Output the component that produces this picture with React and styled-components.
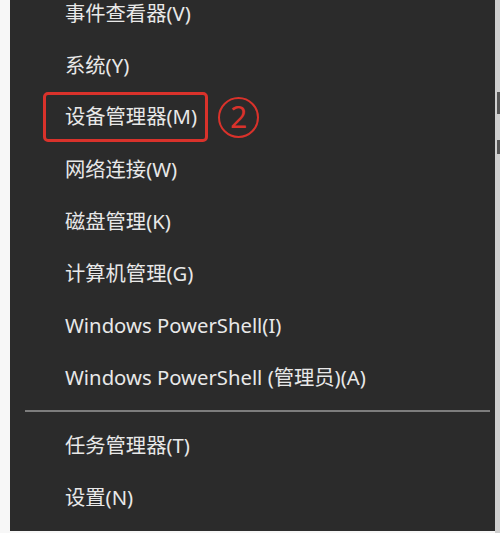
import React from 'react'
import styled, { createGlobalStyle } from 'styled-components'

const GlobalStyle = createGlobalStyle`
    html, body { margin: 0; padding: 0; background: #f4f4f4; }
    body { font-family: "Noto Sans", "Noto Sans CJK SC", sans-serif; }
`

const items = [
    { label: '事件查看器(V)' },
    { label: '系统(Y)' },
    { label: '设备管理器(M)', marked: true, step: '2' },
    { label: '网络连接(W)' },
    { label: '磁盘管理(K)' },
    { label: '计算机管理(G)' },
    { label: 'Windows PowerShell(I)' },
    { label: 'Windows PowerShell (管理员)(A)' },
    { divider: true },
    { label: '任务管理器(T)' },
    { label: '设置(N)' }
]

const App = () => (
    <Page>
        <GlobalStyle />
        <Gutter />
        <Menu>
            <List>
                {items.map((item, i) => item.divider
                    ? <Divider key={i} />
                    : (
                        <Row key={i}>
                            <Label marked={item.marked}>{item.label}</Label>
                            {item.step && <Step>{item.step}</Step>}
                        </Row>
                    ))}
            </List>
        </Menu>
        <BehindWindow>
            <Mark top='92px' h='22px' />
            <Mark top='140px' h='14px' />
        </BehindWindow>
    </Page>
)

export default App

const Page = styled.div`
    display: flex;
    height: 533px;
    width: 500px;
    overflow: hidden;
    background: #f7f7f7;
`
const Gutter = styled.div`
    width: 10px;
    flex-shrink: 0;
    background: #f7f7f7;
`
const Menu = styled.div`
    flex: 1;
    height: 531px;
    background: #2b2b2b;
    overflow: hidden;
`
const List = styled.div`
    display: flex;
    flex-direction: column;
    margin-top: -13px;
`
const Row = styled.div`
    display: flex;
    align-items: center;
    height: 52px;
    padding-left: 55px;
`
const Label = styled.span`
    color: #e8e8e8;
    font-size: 20.3px;
    line-height: 26px;
    white-space: nowrap;
    ${ ({ marked }) => marked && `
        border: 3px solid #d9322b;
        border-radius: 5px;
        padding: 8px 8px 10px 19px;
        margin-left: -22px;
    ` }
`
const Step = styled.span`
    display: inline-flex;
    align-items: center;
    justify-content: center;
    box-sizing: border-box;
    width: 41px;
    height: 41px;
    margin-left: 10px;
    border: 2.5px solid #d9322b;
    border-radius: 50%;
    color: #d9322b;
    font-family: "Noto Sans", sans-serif;
    font-size: 30px;
    font-weight: 400;
    line-height: 1;
`
const Divider = styled.div`
    height: 16px;
    display: flex;
    align-items: center;
    padding: 0 15px 0 15px;
    margin-right: -10px;
    &::after {
        content: "";
        flex: 1;
        height: 2px;
        background: #7d7d7d;
    }
`
const BehindWindow = styled.div`
    position: relative;
    width: 5px;
    flex-shrink: 0;
    background: #cfcfcf;
`
const Mark = styled.div`
    position: absolute;
    right: 0;
    width: 3px;
    top: ${ ({ top }) => top };
    height: ${ ({ h }) => h };
    background: #555;
`
